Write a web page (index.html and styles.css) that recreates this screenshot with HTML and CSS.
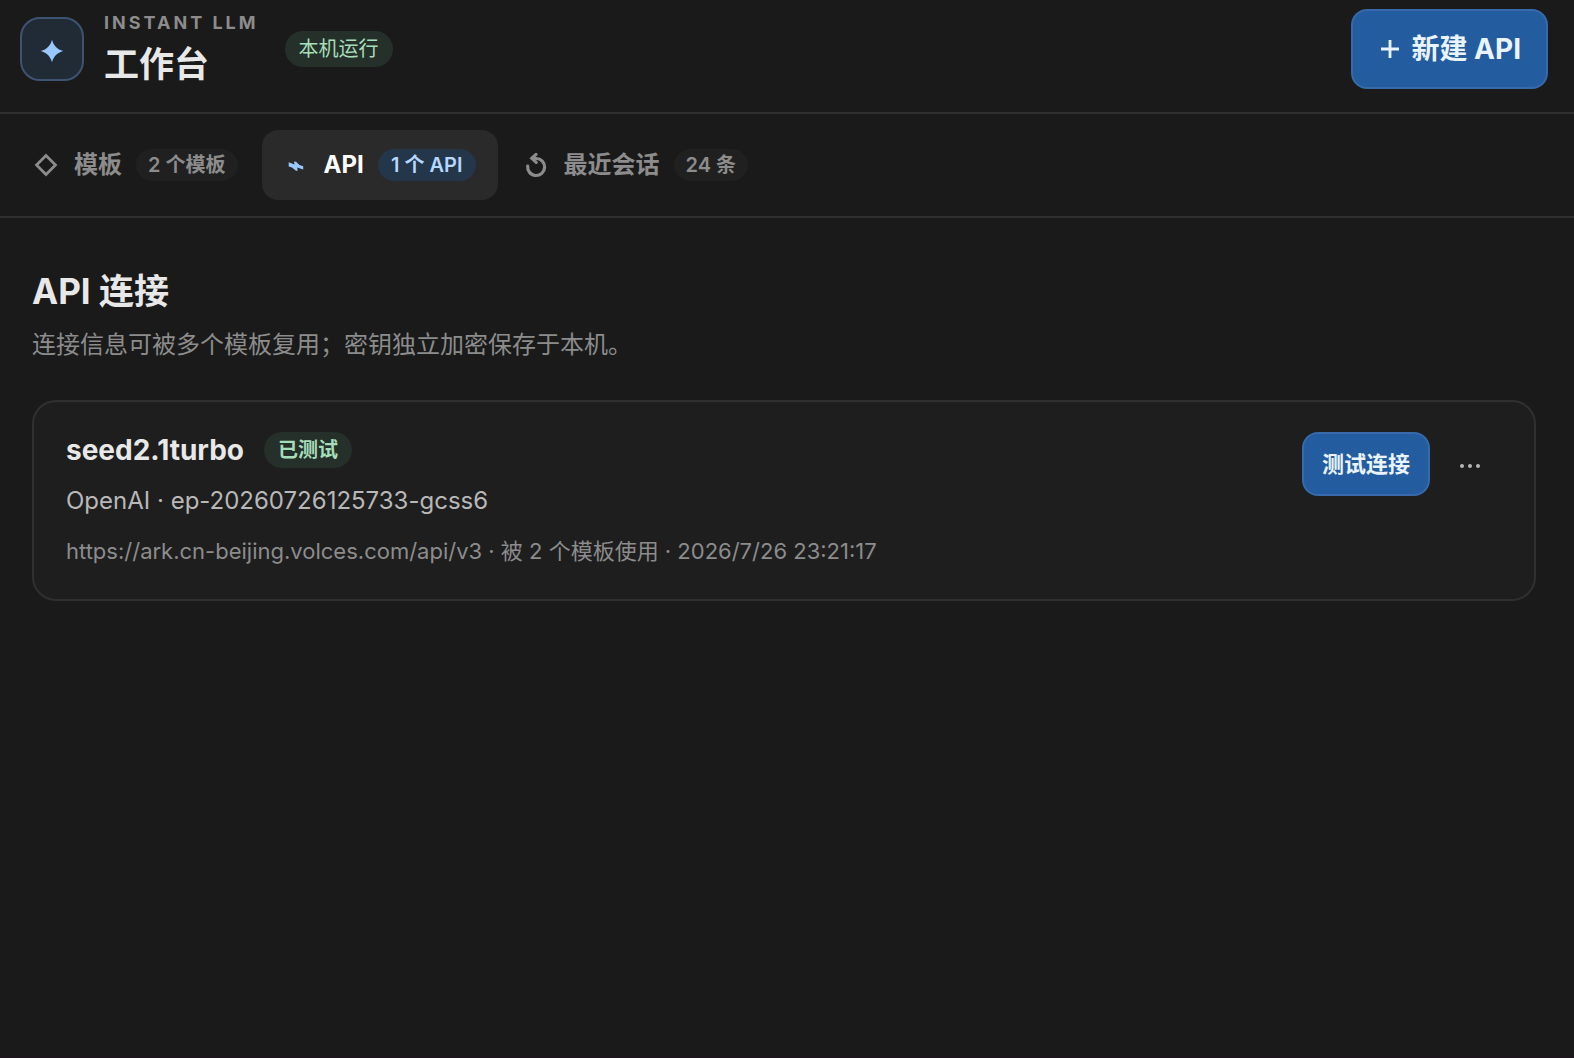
FILE: index.html
```html
<!DOCTYPE html>
<html lang="zh-CN">
<head>
    <meta charset="UTF-8">
    <meta name="viewport" content="width=device-width, initial-scale=1.0">
    <title>Instant LLM 工作台</title>
    <link rel="stylesheet" href="styles.css">
</head>
<body>
    <header class="topbar">
        <div class="logo">
            <svg width="24" height="24" viewBox="0 0 24 24" aria-hidden="true">
                <path d="M12 .7C13.800 7 17 10.200 23.300 12 17 13.800 13.800 17 12 23.300 10.200 17 7 13.800.7 12 7 10.200 10.200 7 12 .7Z" fill="currentColor"/>
            </svg>
        </div>
        <div class="brand">
            <span class="eyebrow">INSTANT LLM</span>
            <h1>工作台</h1>
        </div>
        <span class="badge">本机运行</span>
        <button type="button" class="btn btn-large">
            <svg width="18" height="18" viewBox="0 0 18 18" aria-hidden="true">
                <path d="M9 0v18M0 9h18" fill="none" stroke="currentColor" stroke-width="2.800"/>
            </svg>
            <span>新建 API</span>
        </button>
    </header>

    <nav class="tabs">
        <button type="button" class="tab">
            <svg class="tab-icon" viewBox="0 0 28 28" aria-hidden="true">
                <path d="M14 4.500 23.500 14 14 23.500 4.500 14Z" fill="none" stroke="currentColor" stroke-width="2.700"/>
            </svg>
            <span>模板</span>
            <span class="count">2 个模板</span>
        </button>
        <button type="button" class="tab active">
            <svg class="tab-icon" viewBox="0 0 28 28" aria-hidden="true">
                <path d="M6.700 11.300 12.600 13.600 12 10.500 14 10.700 17.500 14 21.200 15.200V18.600L15.300 16.500 15.600 20 13.600 19.600 10 16.600 6.700 15.400Z" fill="currentColor"/>
            </svg>
            <span>API</span>
            <span class="count">1 个 API</span>
        </button>
        <button type="button" class="tab">
            <svg class="tab-icon" viewBox="0 0 28 28" aria-hidden="true">
                <g fill="none" stroke="currentColor" stroke-width="3.200" stroke-linecap="round">
                    <path d="M5.700 15A8.500 8.500 0 1 0 14.200 7.500H10.500"/>
                    <path d="M14 3.400 9.800 7.300 14.200 11.400"/>
                </g>
            </svg>
            <span>最近会话</span>
            <span class="count">24 条</span>
        </button>
    </nav>

    <main class="content">
        <h2>API 连接</h2>
        <p class="subtitle">连接信息可被多个模板复用；密钥独立加密保存于本机。</p>

        <article class="card">
            <div class="card-info">
                <div class="card-title">
                    <h3>seed2.1turbo</h3>
                    <span class="badge badge-bold">已测试</span>
                </div>
                <p class="model">OpenAI · ep-20260726125733-gcss6</p>
                <p class="meta">https://ark.cn-beijing.volces.com/api/v3 · 被 2 个模板使用 · 2026/7/26 23:21:17</p>
            </div>
            <div class="card-actions">
                <button type="button" class="btn">测试连接</button>
                <button type="button" class="more" aria-label="更多">
                    <svg width="20" height="4" viewBox="0 0 20 4" aria-hidden="true">
                        <circle cx="2" cy="2" r="2"/>
                        <circle cx="10" cy="2" r="2"/>
                        <circle cx="18" cy="2" r="2"/>
                    </svg>
                </button>
            </div>
        </article>
    </main>
</body>
</html>
```
FILE: styles.css
```css
* {
    box-sizing: border-box;
}
body {
    margin: 0;
    min-height: 100vh;
    background-color: #1a1a1a;
    border-bottom: 2px solid #1e161d;
    color: #e8e8e8;
    font-family: Inter, "Noto Sans CJK SC", sans-serif;
}
h1, h2, h3, p {
    margin: 0;
}
button {
    font-family: inherit;
    cursor: pointer;
}
svg {
    flex: none;
}

/* header */
.topbar {
    display: flex;
    align-items: center;
    padding: 9px 26px 23px 20px;
    border-bottom: 2px solid #303030;
}
.logo {
    display: flex;
    align-items: center;
    justify-content: center;
    width: 64px;
    height: 64px;
    padding-top: 3px;
    margin-right: 20px;
    border: 2px solid #3c5371;
    border-radius: 20px;
    background-color: #202b36;
    color: #99c8ff;
}
.brand {
    display: flex;
    flex-direction: column;
    gap: 8px;
    padding-top: 2px;
    margin-right: 26px;
}
.eyebrow {
    color: #8c8c8c;
    font-size: 18px;
    font-weight: 700;
    line-height: 20px;
    letter-spacing: 3px;
}
h1 {
    font-size: 35px;
    font-weight: 700;
    line-height: 46px;
}
.badge {
    padding: 0 14px;
    border-radius: 18px;
    background-color: #243029;
    color: #a6deb9;
    font-size: 20px;
    line-height: 36px;
    white-space: nowrap;
}
.badge-bold {
    font-weight: 700;
}
.btn {
    display: flex;
    align-items: center;
    justify-content: center;
    gap: 12px;
    height: 64px;
    padding: 0 18px 4px;
    border: 2px solid #366aaa;
    border-radius: 16px;
    background-color: #235c9f;
    color: #eaf4ff;
    font-size: 22px;
    font-weight: 700;
    white-space: nowrap;
}
.btn:hover {
    background-color: #2b68b0;
}
.btn-large {
    height: 80px;
    margin-left: auto;
    padding: 0 25px 0 28px;
    font-size: 28px;
    line-height: 32px;
}

/* tabs */
.tabs {
    display: flex;
    gap: 4px;
    padding: 16px 12px;
    border-bottom: 2px solid #303030;
}
.tab {
    display: flex;
    align-items: center;
    gap: 14px;
    min-width: 236px;
    height: 70px;
    padding: 0 20px;
    border: none;
    border-radius: 16px;
    background: none;
    color: #8c8c8c;
    font-size: 24px;
    font-weight: 700;
    line-height: 32px;
    white-space: nowrap;
}
.tab-icon {
    width: 28px;
    height: 28px;
}
.count {
    padding: 0 12px;
    border-radius: 16px;
    background-color: #202020;
    font-size: 20px;
    font-weight: 600;
}
.active {
    background-color: #2a2a2a;
    color: #ffffff;
}
.active .tab-icon {
    color: #99c8ff;
}
.active .count {
    min-width: 98px;
    background-color: #24364a;
    color: #b5d7ff;
}

/* connections */
.content {
    padding: 48px 38px 48px 32px;
}
h2 {
    font-size: 35px;
    font-weight: 700;
    line-height: 50px;
}
.subtitle {
    margin-top: 10px;
    color: #8c8c8c;
    font-size: 24px;
    line-height: 38px;
}
.card {
    display: flex;
    justify-content: space-between;
    gap: 24px;
    margin-top: 36px;
    padding: 30px 32px;
    border: 2px solid #303030;
    border-radius: 24px;
    background-color: #1e1e1e;
}
.card-title {
    display: flex;
    align-items: center;
    gap: 20px;
}
h3 {
    font-size: 28px;
    font-weight: 700;
    line-height: 36px;
}
.model {
    margin-top: 15px;
    color: #b8b8b8;
    font-size: 24px;
    line-height: 36px;
}
.meta {
    margin-top: 14px;
    color: #8c8c8c;
    font-size: 22px;
    line-height: 36px;
}
.card-actions {
    display: flex;
    gap: 8px;
}
.more {
    display: flex;
    align-items: center;
    justify-content: center;
    width: 64px;
    height: 64px;
    padding: 4px 0 0;
    border: none;
    border-radius: 16px;
    background: none;
    fill: #b8b8b8;
}
.more:hover {
    background-color: #2a2a2a;
}
```
